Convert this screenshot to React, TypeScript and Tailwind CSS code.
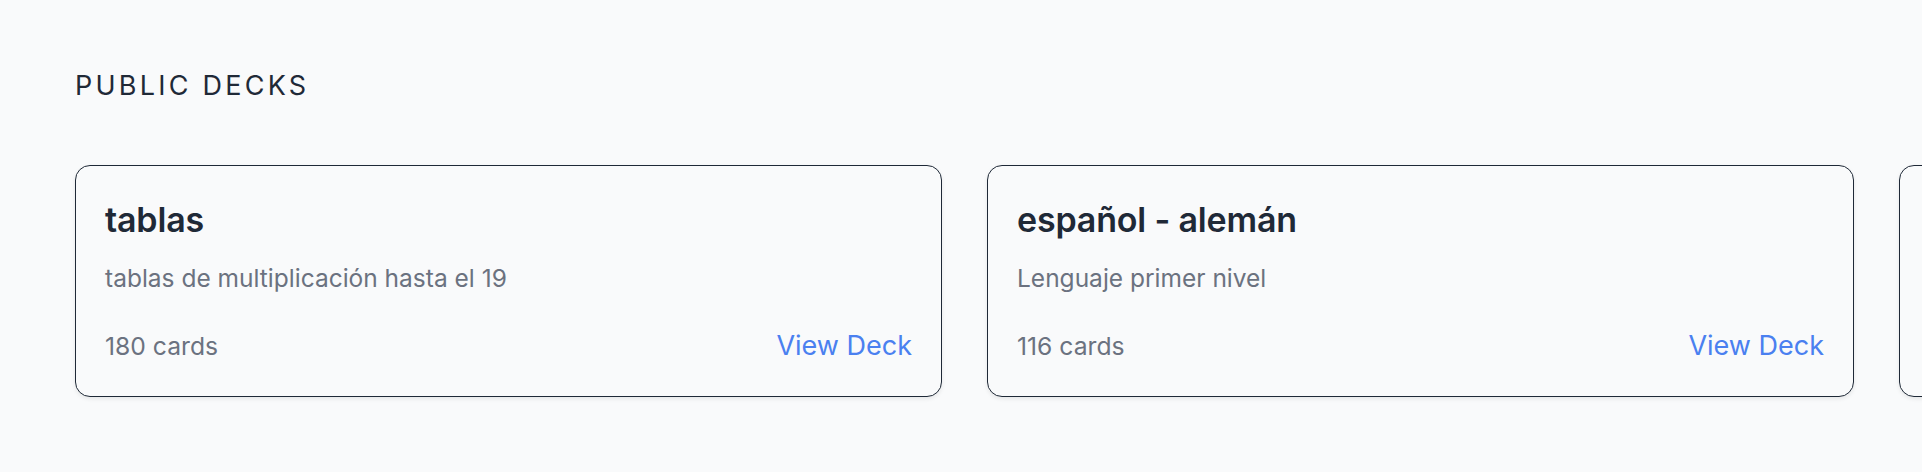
import React from "react";

type Deck = { title: string; description: string; count: number };

const decks: Deck[] = [
  { title: "tablas", description: "tablas de multiplicación hasta el 19", count: 180 },
  { title: "español - alemán", description: "Lenguaje primer nivel", count: 116 },
  { title: "inglés", description: "Vocabulario básico", count: 64 },
];

function DeckCard({ deck }: { deck: Deck }) {
  return (
    <div className="flex w-[867px] shrink-0 flex-col rounded-[15px] border border-[#1f2937] bg-[#f9fafb] pb-[32px] pl-[29px] pr-[29px] pt-[30px] shadow-[0_2px_4px_rgba(0,0,0,0.08)]">
      <h3 className="text-[34px] font-semibold leading-[48px] tracking-[-0.005em] text-[#1f2937]">{deck.title}</h3>
      <p className="mt-[18px] text-[24.5px] leading-[32px] text-[#6b7280]">{deck.description}</p>
      <div className="mt-[34px] flex items-center justify-between leading-[36px]">
        <span className="text-[24.7px] text-[#6b7280]">{deck.count} cards</span>
        <a href="#" className="text-[27px] text-[#4a80f0]">View Deck</a>
      </div>
    </div>
  );
}

export default function App() {
  return (
    <div
      className="h-[472px] w-full overflow-hidden bg-[#f9fafb] pl-[75px] pt-[68px]"
      style={{ fontFamily: "Inter, 'Noto Sans', sans-serif" }}
    >
      <h2 className="text-[27px] font-normal uppercase leading-[36px] tracking-[0.12em] text-[#1f2937]">
        Public Decks
      </h2>
      <div className="mt-[61px] flex gap-[45px]">
        {decks.map((d) => (
          <DeckCard key={d.title} deck={d} />
        ))}
      </div>
    </div>
  );
}
